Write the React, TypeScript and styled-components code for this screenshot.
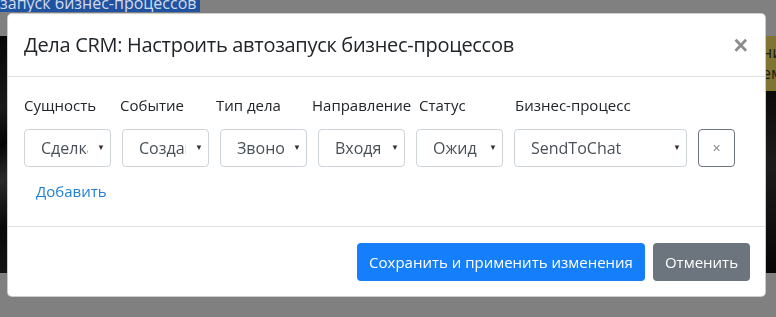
import React from "react";
import styled, { createGlobalStyle } from "styled-components";

const Global = createGlobalStyle`
  html, body { margin: 0; padding: 0; width: 776px; height: 317px; overflow: hidden; }
  body { font-family: "Open Sans", "Noto Sans", "Liberation Sans", sans-serif; color: #212529; }
  * { box-sizing: border-box; }
`;

const Page = styled.div`
  position: fixed;
  inset: 0;
  background: #808080;
  display: flex;
  flex-direction: column;
`;

const TopStrip = styled.div`
  height: 12px;
  display: flex;
`;

const BlueTab = styled.div`
  width: 200px;
  background: #1f52a0;
  color: #d3dbea;
  font-size: 16px;
  line-height: 12px;
  overflow: hidden;
  white-space: nowrap;
  display: flex;
  align-items: flex-end;
  span { transform: translateY(-3px); }
`;

const Middle = styled.div`
  margin-top: 24px;
  height: 237px;
  display: flex;
  justify-content: space-between;
`;

const LeftStrip = styled.div`
  width: 10px;
  background: linear-gradient(160deg, #050505 0%, #1a1a1a 30%, #050505 45%, #2a2a2a 60%, #080808 80%, #141414 100%);
`;

const RightStrip = styled.div`
  width: 14px;
  display: flex;
  flex-direction: column;
`;

const Olive = styled.div`
  height: 55px;
  background: #7f7434;
  color: #1a1a10;
  font-size: 16px;
  line-height: 21px;
  padding-top: 6px;
  overflow: hidden;
  white-space: nowrap;
`;

const Dark = styled.div`
  flex: 1;
  background: linear-gradient(200deg, #0a0a0a, #1c1c1c 40%, #050505);
`;

const Modal = styled.div`
  position: absolute;
  left: 7px;
  top: 13px;
  width: 759px;
  background: #fff;
  border: 1px solid rgba(0, 0, 0, 0.2);
  border-radius: 5px;
  display: flex;
  flex-direction: column;
`;

const Header = styled.div`
  display: flex;
  align-items: flex-start;
  justify-content: space-between;
  padding: 16px;
  border-bottom: 1px solid #dee2e6;
`;

const Title = styled.h5`
  margin: 0;
  font-size: 20px;
  line-height: 30px;
  font-weight: 500;
  letter-spacing: -0.3px;
`;

const Close = styled.button`
  border: 0;
  background: transparent;
  padding: 0 1px 0 0;
  font-family: "Liberation Sans", sans-serif;
  font-size: 25px;
  line-height: 30px;
  font-weight: 700;
  color: #8c8c8c;
`;

const Body = styled.div`
  padding: 16px;
  display: flex;
  flex-direction: column;
`;

const LabelRow = styled.div`
  display: flex;
  height: 24px;
  align-items: center;
`;

const Label = styled.div<{ $w: number }>`
  width: ${(p) => p.$w}px;
  font-size: 15px;
  color: #212529;
  white-space: nowrap;
`;

const FieldRow = styled.div`
  margin-top: 12px;
  display: flex;
  gap: 11px;
`;

const Select = styled.div<{ $w: number }>`
  width: ${(p) => p.$w}px;
  height: 38px;
  border: 1px solid #ced4da;
  border-radius: 4px;
  display: flex;
  align-items: center;
  padding: 0 5px 0 16px;
  color: #495057;
  font-size: 16px;
`;

const SelectText = styled.span<{ $w: number }>`
  width: ${(p) => p.$w}px;
  overflow: hidden;
  white-space: nowrap;
  flex: none;
`;

const Arrow = styled.span`
  margin-left: auto;
  font-size: 8px;
  color: #333;
  transform: translateY(-2px);
`;

const RemoveBtn = styled.button`
  width: 37px;
  height: 38px;
  border: 1px solid #6c757d;
  border-radius: 4px;
  background: #fff;
  color: #8a8a8a;
  font-size: 14px;
  font-family: "Liberation Sans", sans-serif;
  padding: 0;
`;

const AddLink = styled.button`
  align-self: flex-start;
  margin-top: 5px;
  height: 38px;
  border: 0;
  background: transparent;
  color: #2181d6;
  font-family: inherit;
  font-size: 15px;
  padding: 0 12px;
`;

const Footer = styled.div`
  border-top: 1px solid #dee2e6;
  padding: 16px 15px 15px;
  display: flex;
  justify-content: flex-end;
  gap: 8px;
`;

const Btn = styled.button<{ $primary?: boolean }>`
  height: 38px;
  padding: 0 12px;
  border: 0;
  border-radius: 4px;
  font-family: inherit;
  font-size: 15px;
  color: #fff;
  background: ${(p) => (p.$primary ? "#157ffb" : "#6c757d")};
`;

const labels: [string, number][] = [
  ["Сущность", 96],
  ["Событие", 96],
  ["Тип дела", 96],
  ["Направление", 107],
  ["Статус", 96],
  ["Бизнес-процесс", 150],
];

const selects: [string, number, number][] = [
  ["Сделка", 87, 47],
  ["Создание", 87, 47],
  ["Звонок", 87, 47],
  ["Входящий", 87, 47],
  ["Ожидает", 87, 44],
  ["SendToChat", 173, 120],
];

export default function App() {
  return (
    <>
      <Global />
      <Page>
        <TopStrip>
          <BlueTab>
            <span>запуск бизнес-процессов</span>
          </BlueTab>
        </TopStrip>
        <Middle>
          <LeftStrip />
          <RightStrip>
            <Olive>
              ни
              <br />
              ем
            </Olive>
            <Dark />
          </RightStrip>
        </Middle>
      </Page>
      <Modal>
        <Header>
          <Title>Дела CRM: Настроить автозапуск бизнес-процессов</Title>
          <Close>×</Close>
        </Header>
        <Body>
          <LabelRow>
            {labels.map(([t, w]) => (
              <Label key={t} $w={w}>
                {t}
              </Label>
            ))}
          </LabelRow>
          <FieldRow>
            {selects.map(([t, w, tw]) => (
              <Select key={t} $w={w}>
                <SelectText $w={tw}>{t}</SelectText>
                <Arrow>▼</Arrow>
              </Select>
            ))}
            <RemoveBtn>×</RemoveBtn>
          </FieldRow>
          <AddLink>Добавить</AddLink>
        </Body>
        <Footer>
          <Btn $primary>Сохранить и применить изменения</Btn>
          <Btn>Отменить</Btn>
        </Footer>
      </Modal>
    </>
  );
}
